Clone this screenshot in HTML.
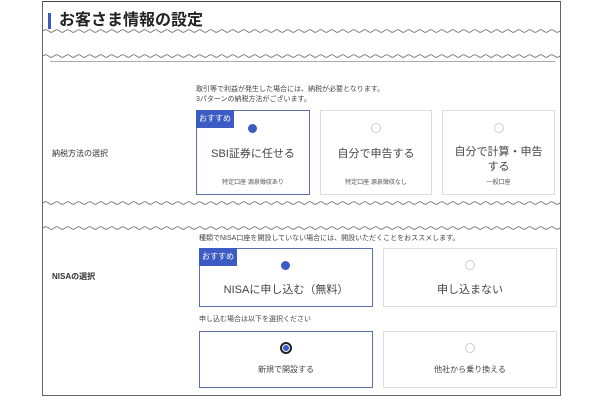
<!DOCTYPE html>
<html><head><meta charset="utf-8"><style>
*{margin:0;padding:0;box-sizing:border-box}
body{width:600px;height:400px;background:#fff;position:relative;overflow:hidden;font-family:"Liberation Sans","Noto Sans CJK JP",sans-serif;color:#333}
.a{position:absolute}
.card{position:absolute;border:1px solid #ddd;background:#fff;text-align:center}
.card.sel{border:1px solid #5a6fb0}
.badge{position:absolute;left:-1px;top:-1px;background:#3c5bc4;color:#fff;font-size:8px;padding:3px 3px;line-height:12px}
.radio{position:absolute;left:50%;width:10px;height:10px;margin-left:-5px;border-radius:50%;border:1px solid #ccc;background:#fff}
.radio.on{border:none;background:#3c5bc4;width:9px;height:9px}
.lbl{position:absolute;left:0;right:0;font-size:11px;color:#444}
.sub{position:absolute;left:0;right:0;font-size:6px;color:#555}
.t{font-size:7px;color:#444;position:absolute}
</style></head><body>
<div class="a" style="left:42px;top:1px;width:519px;height:395px;border:1px solid #666;border-top:1px solid #444"></div>
<div class="a" style="left:48px;top:13px;width:3px;height:16px;background:#3c5bc4"></div>
<div class="a" style="left:59px;top:11px;font-size:16px;font-weight:bold;color:#222;line-height:20px">お客さま情報の設定</div>
<svg class="a" style="left:0;top:0" width="600" height="400">
<defs><path id="wv" d="M0 0 q2.75 -2.5 5.5 0 t5.5 0 t5.5 0 t5.5 0 t5.5 0 t5.5 0 t5.5 0 t5.5 0 t5.5 0 t5.5 0 t5.5 0 t5.5 0 t5.5 0 t5.5 0 t5.5 0 t5.5 0 t5.5 0 t5.5 0 t5.5 0 t5.5 0 t5.5 0 t5.5 0 t5.5 0 t5.5 0 t5.5 0 t5.5 0 t5.5 0 t5.5 0 t5.5 0 t5.5 0 t5.5 0 t5.5 0 t5.5 0 t5.5 0 t5.5 0 t5.5 0 t5.5 0 t5.5 0 t5.5 0 t5.5 0 t5.5 0 t5.5 0 t5.5 0 t5.5 0 t5.5 0 t5.5 0 t5.5 0 t5.5 0 t5.5 0 t5.5 0" fill="none" stroke="#555" stroke-width="0.8"/></defs>
<svg x="43" y="0" width="517" height="400">
<use href="#wv" y="31"/><use href="#wv" x="275" y="31"/>
<use href="#wv" y="56"/><use href="#wv" x="275" y="56"/>
<use href="#wv" y="203"/><use href="#wv" x="275" y="203"/>
<use href="#wv" y="228"/><use href="#wv" x="275" y="228"/>
</svg>
</svg>
<div class="a" style="left:50px;top:61px;width:505px;height:1px;background:#aaa"></div>
<div class="t" style="left:196px;top:84px">取引等で利益が発生した場合には、納税が必要となります。</div>
<div class="t" style="left:196px;top:94px">3パターンの納税方法がございます。</div>
<div class="a" style="left:52px;top:148px;font-size:8px;color:#333">納税方法の選択</div>
<div class="card sel" style="left:196px;top:110px;width:114px;height:85px"><div class="badge">おすすめ</div><div class="radio on" style="top:13px"></div><div class="lbl" style="top:34px">SBI証券に任せる</div><div class="sub" style="top:66px">特定口座 源泉徴収あり</div></div>
<div class="card" style="left:320px;top:110px;width:112px;height:85px"><div class="radio" style="top:12px"></div><div class="lbl" style="top:34px">自分で申告する</div><div class="sub" style="top:66px">特定口座 源泉徴収なし</div></div>
<div class="card" style="left:442px;top:110px;width:113px;height:85px"><div class="radio" style="top:12px"></div><div class="lbl" style="top:34px;line-height:15px">自分で計算・申告<br>する</div><div class="sub" style="top:66px">一般口座</div></div>
<div class="t" style="left:199px;top:233px">種類でNISA口座を開設していない場合には、開設いただくことをおススメします。</div>
<div class="a" style="left:52px;top:271px;font-size:8px;font-weight:bold;color:#333">NISAの選択</div>
<div class="card sel" style="left:199px;top:248px;width:174px;height:59px"><div class="badge">おすすめ</div><div class="radio on" style="top:12px"></div><div class="lbl" style="top:32px">NISAに申し込む（無料）</div></div>
<div class="card" style="left:383px;top:248px;width:174px;height:59px"><div class="radio" style="top:11px"></div><div class="lbl" style="top:32px">申し込まない</div></div>
<div class="t" style="left:199px;top:314px">申し込む場合は以下を選択ください</div>
<div class="card sel" style="left:199px;top:331px;width:174px;height:57px"><div class="radio on" style="top:10px;width:12px;height:12px;margin-left:-6px;border:2px solid #222;box-shadow:inset 0 0 0 1px #fff"></div><div class="lbl" style="top:32px;font-size:8px">新規で開設する</div></div>
<div class="card" style="left:383px;top:331px;width:174px;height:57px"><div class="radio" style="top:11px"></div><div class="lbl" style="top:32px;font-size:8px">他社から乗り換える</div></div>
</body></html>
